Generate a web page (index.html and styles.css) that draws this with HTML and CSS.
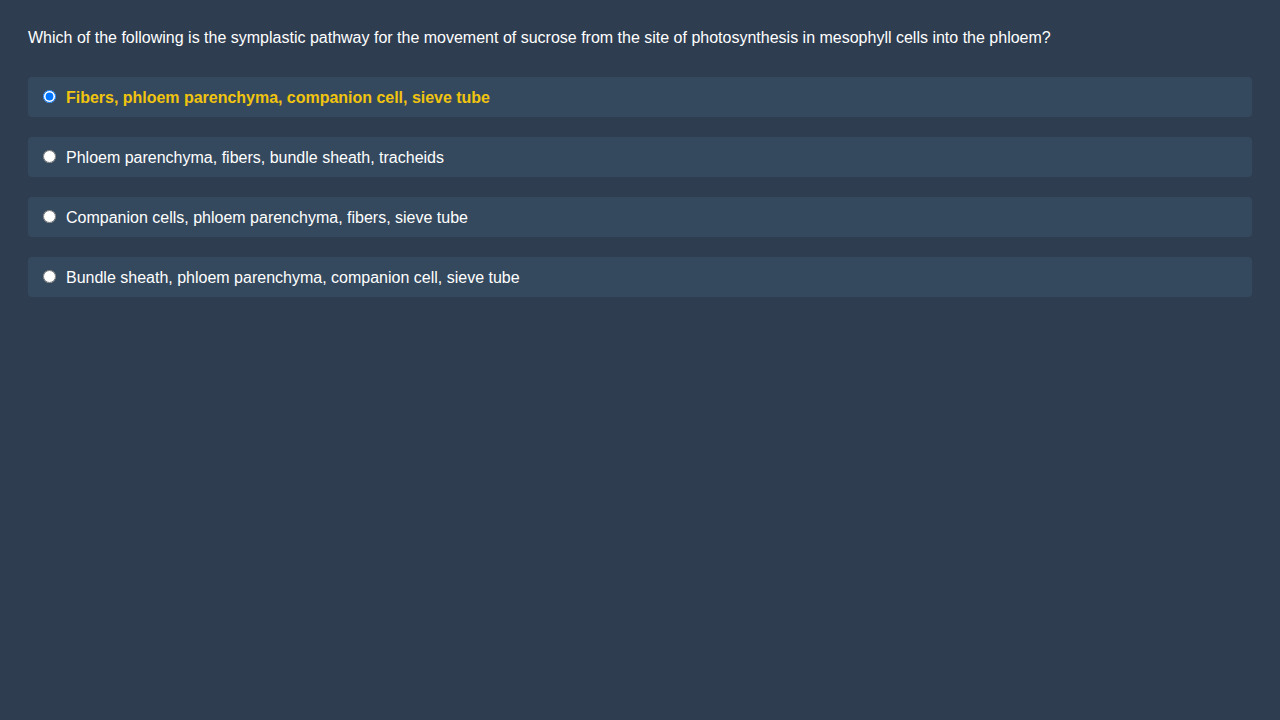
FILE: index.html
```html
<!DOCTYPE html>
<html>
<head>
<meta charset="utf-8">
<link rel="stylesheet" href="styles.css">
</head>
<body>
<div class="quiz">
  <p class="question">Which of the following is the symplastic pathway for the movement of sucrose from the site of photosynthesis in mesophyll cells into the phloem?</p>
  <div class="options">
    <label class="option selected"><input type="radio" name="q" checked><span>Fibers, phloem parenchyma, companion cell, sieve tube</span></label>
    <label class="option"><input type="radio" name="q"><span>Phloem parenchyma, fibers, bundle sheath, tracheids</span></label>
    <label class="option"><input type="radio" name="q"><span>Companion cells, phloem parenchyma, fibers, sieve tube</span></label>
    <label class="option"><input type="radio" name="q"><span>Bundle sheath, phloem parenchyma, companion cell, sieve tube</span></label>
  </div>
</div>
</body>
</html>
```
FILE: styles.css
```css
html, body {
  margin: 0;
  padding: 0;
  background: #2e3d50;
  height: 100%;
}
body {
  font-family: "Liberation Sans", Arial, sans-serif;
  font-size: 16px;
  color: #ffffff;
}
.quiz {
  padding: 28px;
}
.question {
  margin: 0 0 30px 0;
  padding-top: 1px;
  line-height: 18px;
}
.options {
  display: flex;
  flex-direction: column;
  gap: 20px;
}
.option {
  display: flex;
  align-items: center;
  height: 40px;
  box-sizing: border-box;
  padding: 0 10px;
  background: #34495e;
  border-radius: 4px;
  cursor: pointer;
}
.option input {
  margin: 0 10px 2px 5px;
  width: 13px;
  height: 13px;
}
.option span {
  padding-top: 2px;
  line-height: 18px;
}
.option.selected span {
  color: #f1c40f;
  font-weight: bold;
  letter-spacing: -0.02px;
}
```
